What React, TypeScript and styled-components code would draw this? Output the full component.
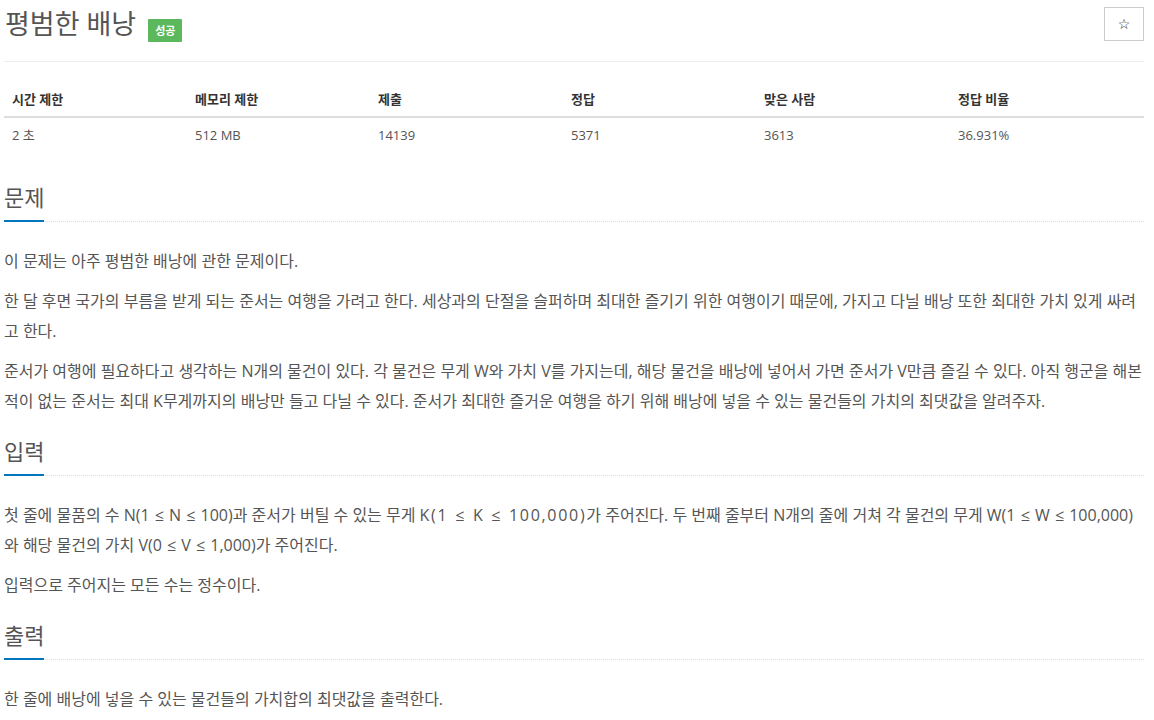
import React from "react";
import styled, { createGlobalStyle } from "styled-components";

const GlobalStyle = createGlobalStyle`
  html, body {
    margin: 0;
    padding: 0;
    background: #fff;
  }
  body {
    font-family: "Open Sans", "Noto Sans CJK KR", sans-serif;
    color: #555;
  }
`;

const Page = styled.div`
  width: 1140px;
  padding-left: 4px;
`;

const Header = styled.div`
  display: flex;
  justify-content: space-between;
  align-items: flex-start;
  height: 61px;
  border-bottom: 1px solid #eee;
`;

const TitleRow = styled.div`
  display: flex;
  align-items: flex-start;
  margin-top: 7px;
  padding-left: 1px;
`;

const Title = styled.h1`
  margin: 0;
  font-size: 27px;
  line-height: 34px;
  font-weight: 400;
  color: #555;
`;

const Badge = styled.span<{ $bg: string }>`
  display: inline-block;
  margin-left: 12px;
  margin-top: 12px;
  padding: 0 7px;
  height: 23px;
  line-height: 23px;
  font-size: 11px;
  font-weight: 700;
  color: #fff;
  background: ${(p) => p.$bg};
  border-radius: 1px;
`;

const StarButton = styled.button`
  margin-top: 7px;
  width: 40px;
  height: 34px;
  background: #fff;
  border: 1px solid #ccc;
  border-radius: 0;
  color: #222;
  font-size: 14px;
  line-height: 1;
  padding: 0;
  cursor: pointer;
  font-family: "DejaVu Sans", sans-serif;
`;

const Table = styled.div`
  margin-top: 20px;
  margin-bottom: 20px;
  display: grid;
  grid-template-columns: 183px 183px 193px 193px 194px 194px;
`;

const HeadCell = styled.div`
  padding: 7px 8px;
  line-height: 20px;
  font-size: 13px;
  font-weight: 700;
  color: #333;
  border-bottom: 2px solid #ddd;
`;

const Cell = styled.div`
  padding: 7px 8px;
  line-height: 20px;
  font-size: 13px;
  color: #555;
`;

const Section = styled.section`
  padding-top: 10px;
`;

const Headline = styled.div`
  border-bottom: 1px dotted #ddd;
  margin-bottom: 24px;
`;

const HeadlineText = styled.h2`
  display: inline-block;
  margin: 0 0 -1px 0;
  padding: 0 0 8px 0;
  font-size: 22px;
  line-height: 30px;
  font-weight: 400;
  color: #555;
  border-bottom: 2px solid #0076c0;
`;

const Para = styled.p`
  margin: 0 0 10px 0;
  font-size: 16px;
  line-height: 30px;
  color: #555;
`;

const MathText = styled.span<{ $track?: number }>`
  word-spacing: 1px;
  letter-spacing: ${(p) => p.$track ?? 0}px;
`;

const headers = ["시간 제한", "메모리 제한", "제출", "정답", "맞은 사람", "정답 비율"];
const values = ["2 초", "512 MB", "14139", "5371", "3613", "36.931%"];

export default function App() {
  return (
    <>
      <GlobalStyle />
      <Page>
        <Header>
          <TitleRow>
            <Title>평범한 배낭</Title>
            <Badge $bg="#5cb85c">성공</Badge>
          </TitleRow>
          <StarButton aria-label="즐겨찾기">☆</StarButton>
        </Header>

        <Table>
          {headers.map((h) => (
            <HeadCell key={h}>{h}</HeadCell>
          ))}
          {values.map((v) => (
            <Cell key={v}>{v}</Cell>
          ))}
        </Table>

        <Section>
          <Headline>
            <HeadlineText>문제</HeadlineText>
          </Headline>
          <Para>이 문제는 아주 평범한 배낭에 관한 문제이다.</Para>
          <Para>
            한 달 후면 국가의 부름을 받게 되는 준서는 여행을 가려고 한다. 세상과의 단절을 슬퍼하며 최대한 즐기기 위한 여행이기 때문에, 가지고 다닐 배낭 또한 최대한 가치 있게 싸려고 한다.
          </Para>
          <Para>
            준서가 여행에 필요하다고 생각하는 N개의 물건이 있다. 각 물건은 무게 W와 가치 V를 가지는데, 해당 물건을 배낭에 넣어서 가면 준서가 V만큼 즐길 수 있다. 아직 행군을 해본 적이 없는 준서는 최대 K무게까지의 배낭만 들고 다닐 수 있다. 준서가 최대한 즐거운 여행을 하기 위해 배낭에 넣을 수 있는 물건들의 가치의 최댓값을 알려주자.
          </Para>
        </Section>

        <Section>
          <Headline>
            <HeadlineText>입력</HeadlineText>
          </Headline>
          <Para>
            첫 줄에 물품의 수 <MathText>N(1 ≤ N ≤ 100)</MathText>과 준서가 버틸 수 있는 무게{" "}
            <MathText $track={1.7}>K(1 ≤ K ≤ 100,000)</MathText>가 주어진다. 두 번째 줄부터 N개의 줄에 거쳐 각 물건의 무게{" "}
            <MathText>W(1 ≤ W ≤ 100,000)</MathText>와 해당 물건의 가치 <MathText>V(0 ≤ V ≤ 1,000)</MathText>가
            주어진다.
          </Para>
          <Para>입력으로 주어지는 모든 수는 정수이다.</Para>
        </Section>

        <Section>
          <Headline>
            <HeadlineText>출력</HeadlineText>
          </Headline>
          <Para>한 줄에 배낭에 넣을 수 있는 물건들의 가치합의 최댓값을 출력한다.</Para>
        </Section>
      </Page>
    </>
  );
}
